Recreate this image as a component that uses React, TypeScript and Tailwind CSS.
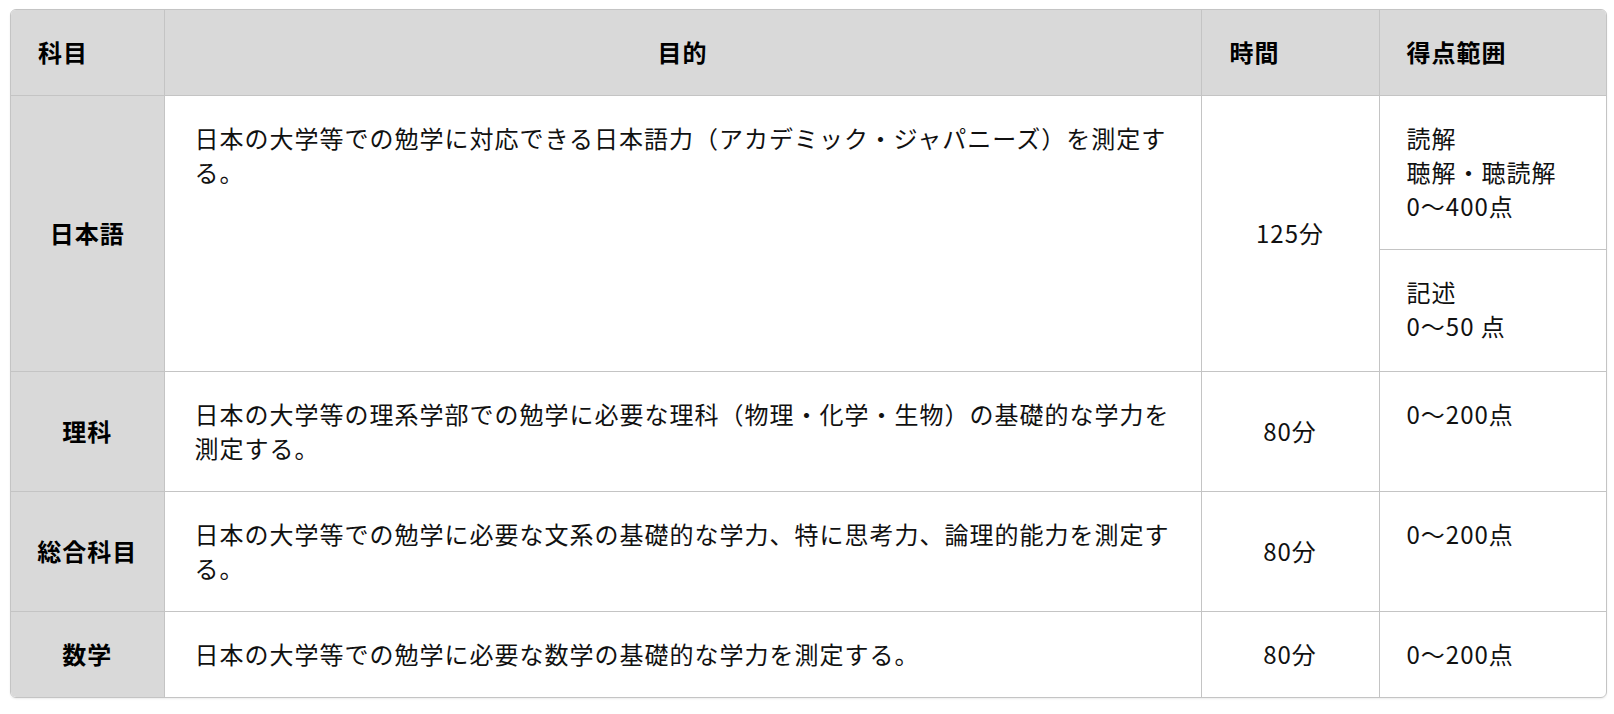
import React from 'react';

type Row = {
  subject: string;
  purpose: string;
  time: string;
  scores: string[][];
};

const rows: Row[] = [
  {
    subject: '日本語',
    purpose: '日本の大学等での勉学に対応できる日本語力（アカデミック・ジャパニーズ）を測定する。',
    time: '125分',
    scores: [['読解', '聴解・聴読解', '0〜400点'], ['記述', '0〜50 点']],
  },
  {
    subject: '理科',
    purpose: '日本の大学等の理系学部での勉学に必要な理科（物理・化学・生物）の基礎的な学力を測定する。',
    time: '80分',
    scores: [['0〜200点']],
  },
  {
    subject: '総合科目',
    purpose: '日本の大学等での勉学に必要な文系の基礎的な学力、特に思考力、論理的能力を測定する。',
    time: '80分',
    scores: [['0〜200点']],
  },
  {
    subject: '数学',
    purpose: '日本の大学等での勉学に必要な数学の基礎的な学力を測定する。',
    time: '80分',
    scores: [['0〜200点']],
  },
];

const cell = 'border border-[#c4c4c4] pt-[25px]';

export default function App() {
  return (
    <div
      className="min-h-screen bg-white pt-[9px] pl-[10px] text-[24px] leading-[34px] tracking-[1px] text-[#111]"
      style={{ fontFamily: '"Noto Sans CJK JP", "Noto Sans", sans-serif' }}
    >
      <div className="w-[1597px] overflow-hidden rounded-md border border-[#c4c4c4] shadow-[0_1px_2px_rgba(0,0,0,0.08)]">
        <table className="w-full table-fixed border-collapse border-hidden">
          <colgroup>
            <col className="w-[153px]" />
            <col className="w-[1037px]" />
            <col className="w-[178px]" />
            <col className="w-[229px]" />
          </colgroup>
          <thead>
            <tr className="bg-[#d9d9d9] font-bold text-black">
              <th className={`${cell} pb-[26px] pl-[27px] text-left font-bold`}>科目</th>
              <th className={`${cell} pb-[26px] text-center font-bold`}>目的</th>
              <th className={`${cell} pb-[26px] pl-[28px] text-left font-bold`}>時間</th>
              <th className={`${cell} pb-[26px] pl-[27px] text-left font-bold`}>得点範囲</th>
            </tr>
          </thead>
          <tbody>
            {rows.map((r) =>
              r.scores.map((lines, i) => (
                <tr key={r.subject + i}>
                  {i === 0 && (
                    <>
                      <td
                        rowSpan={r.scores.length}
                        className={`${cell} pb-[26px] bg-[#d9d9d9] text-center align-middle font-bold text-black`}
                      >
                        {r.subject}
                      </td>
                      <td rowSpan={r.scores.length} className={`${cell} pb-[26px] pl-[30px] pr-[28px] align-top`}>
                        {r.purpose}
                      </td>
                      <td rowSpan={r.scores.length} className={`${cell} pb-[26px] text-center align-middle`}>
                        {r.time}
                      </td>
                    </>
                  )}
                  <td className={`${cell} ${i > 0 ? 'pb-[28px]' : 'pb-[26px]'} pl-[27px] align-top`}>
                    {lines.map((l) => (
                      <div key={l}>{l}</div>
                    ))}
                  </td>
                </tr>
              ))
            )}
          </tbody>
        </table>
      </div>
    </div>
  );
}
